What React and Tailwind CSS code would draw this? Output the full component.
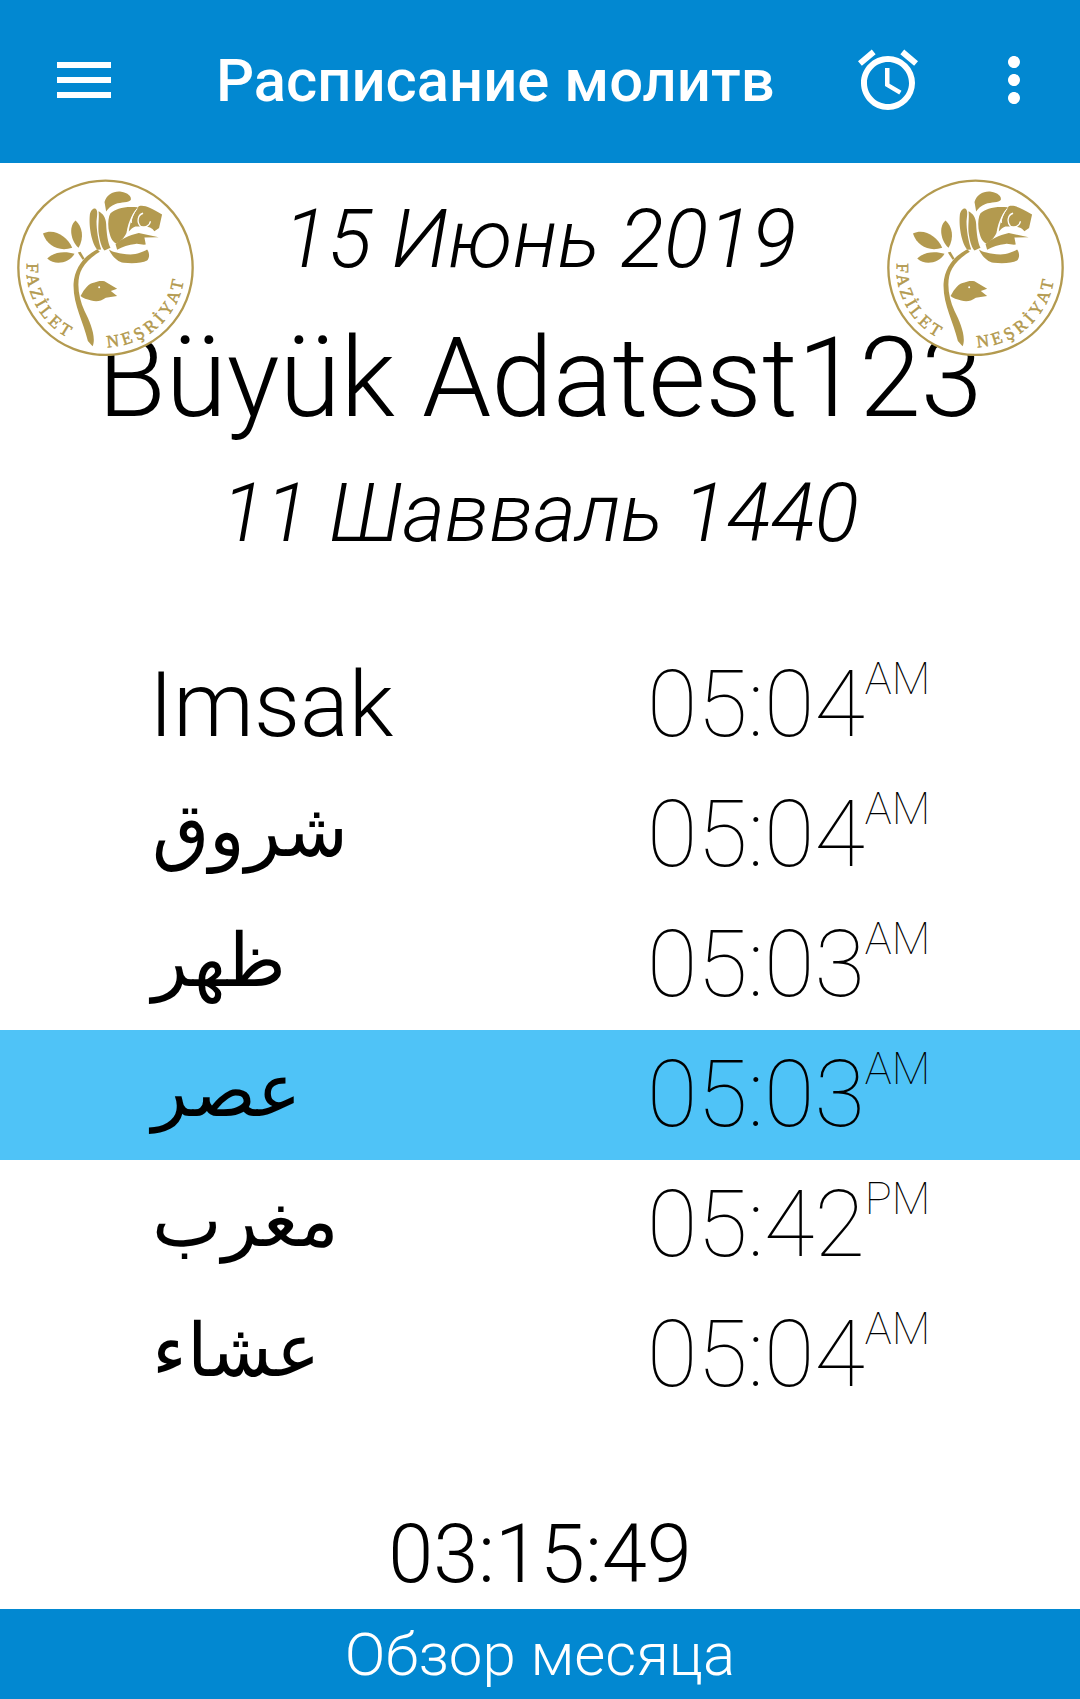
import React from "react";
import { MdMenu, MdAccessAlarm, MdMoreVert } from "react-icons/md";

const prayers = [
  { name: "Imsak", time: "05:04", ampm: "AM" },
  { name: "شروق", time: "05:04", ampm: "AM", arabic: true },
  { name: "ظهر", time: "05:03", ampm: "AM", arabic: true },
  { name: "عصر", time: "05:03", ampm: "AM", arabic: true, active: true },
  { name: "مغرب", time: "05:42", ampm: "PM", arabic: true },
  { name: "عشاء", time: "05:04", ampm: "AM", arabic: true },
];

// viewBox is in the pixels of the 3x crop of the logo
const Logo = ({ className, id }) => (
  <svg viewBox="50 40 530 535" className={className}>
    <circle cx="315" cy="310" r="262" fill="#fff" stroke="#b39a4f" strokeWidth="7" />
    <g fill="#b39a4f">
      {/* leaves */}
      <path d="M127 207C160 190 200 215 215 250C175 262 140 245 127 207Z" />
      <path d="M225 168C245 185 252 220 234 250C215 235 200 190 225 168Z" />
      <path d="M140 282C165 258 200 262 222 268C205 295 165 305 140 282Z" />
      <path d="M232 264L240 262L252 282L246 286Z" />
      {/* stem and bud */}
      <path d="M290 254C250 275 222 310 219 358C217 420 248 470 262 530L276 546C288 520 270 475 252 440C232 395 226 345 245 312C256 292 275 275 298 262Z" />
      <path d="M240 395C252 372 265 356 282 354C290 350 300 348 312 350L350 373L331 380L350 395L316 400C300 412 285 412 272 408C258 405 248 402 240 395Z" />
      <circle cx="296" cy="368" r="3" fill="#fff" />
      {/* rose */}
      <path d="M312 112C318 90 340 78 362 81C382 84 394 95 391 106C385 114 362 112 345 118C332 123 322 132 317 141Z" />
      <path d="M268 150C270 138 278 130 284 132C293 136 290 152 288 170C288 195 293 228 302 255L291 256C275 240 264 190 268 150Z" />
      <path d="M294 140C306 146 316 158 317 178C318 205 322 235 330 250L312 258C305 252 299 235 295 210C291 185 297 160 294 140Z" />
      <path d="M330 146C345 132 372 124 412 128C398 146 385 165 378 205C370 222 358 232 346 236C335 232 328 215 324 192C322 172 324 156 330 146Z" />
      <path d="M415 125C430 120 450 128 485 150L476 190L462 200C455 190 445 186 430 186L405 186C395 190 390 196 385 201C388 178 397 150 415 125Z" />
      <path d="M345 238C360 225 385 212 415 205L475 218L432 219L436 240C425 242 415 236 405 238C385 240 365 246 350 256Z" />
      <path d="M325 255C335 262 355 268 390 270C410 270 428 262 440 255C448 265 448 280 440 288C425 296 400 297 370 295C350 292 335 275 325 255Z" />
    </g>
    <path d="M428 146C412 150 408 172 420 185C432 192 448 184 450 170" fill="none" stroke="#fff" strokeWidth="4" />
    <path d="M410 133C398 146 392 160 393 175" fill="none" stroke="#fff" strokeWidth="3" />
    <defs>
      <path id={id + "l"} d="M79 296A236 236 0 0 0 215 527" />
      <path id={id + "r"} d="M320 548A238 238 0 0 0 553 320" />
    </defs>
    <text fill="#b39a4f" stroke="#b39a4f" strokeWidth="1.5" fontFamily="'Liberation Serif', serif" fontSize="52" letterSpacing="10">
      <textPath href={"#" + id + "l"}>FAZİLET</textPath>
    </text>
    <text fill="#b39a4f" stroke="#b39a4f" strokeWidth="1.5" fontFamily="'Liberation Serif', serif" fontSize="52" letterSpacing="12">
      <textPath href={"#" + id + "r"}>NEŞRİYAT</textPath>
    </text>
  </svg>
);

const PrayerRow = ({ name, time, ampm, arabic, active }) => (
  <div className={`flex h-[130px] items-center justify-between pl-[149px] pr-[154px] ${active ? "bg-[#4fc3f7]" : ""}`}>
    <span
      className={
        arabic
          ? "ml-[3px] pb-[8px] text-[74px] leading-none text-black"
          : "text-[91px] leading-none font-light text-black"
      }
    >
      {name}
    </span>
    <span className="flex w-[279px] items-start">
      <span className="text-[92px] leading-none font-thin text-black">{time}</span>
      <span className="-mt-[3px] text-[45px] leading-none font-thin text-black">{ampm}</span>
    </span>
  </div>
);

export default function App() {
  return (
    <div className="relative flex h-[1699px] w-[1080px] flex-col overflow-hidden bg-white font-['Roboto',sans-serif]">
      <header className="flex h-[163px] items-center bg-[#0288d1] pb-[3px] text-white">
        <MdMenu className="ml-[48px] size-[72px]" />
        <h1 className="ml-[96px] w-[559px] pt-[3px] text-[59.8px] leading-none font-medium">Расписание молитв</h1>
        <MdAccessAlarm className="ml-[77px] size-[72px]" />
        <MdMoreVert className="ml-[54px] size-[72px]" />
      </header>

      <div className="flex flex-col items-center text-black">
        <p className="mt-[28px] text-[82px] leading-[96px] font-light italic">15 Июнь 2019</p>
        <p className="mt-[29px] text-[111px] leading-[124px] font-light">Büyük Adatest123</p>
        <p className="mt-[25px] text-[81.7px] leading-[96px] font-light italic">11 Шавваль 1440</p>
      </div>

      <div className="mt-[79px] flex flex-col">
        {prayers.map((p, i) => (
          <PrayerRow key={i} {...p} />
        ))}
      </div>

      <p className="mt-auto pb-[6px] text-center text-[81px] leading-[96px] font-light text-black">03:15:49</p>
      <footer className="flex h-[90px] items-center justify-center bg-[#0288d1] pt-[2px] text-[60px] leading-none font-light text-white">
        Обзор месяца
      </footer>

      <Logo id="a" className="absolute top-[178px] left-[17px] h-[178px] w-[177px]" />
      <Logo id="b" className="absolute top-[178px] left-[887px] h-[178px] w-[177px]" />
    </div>
  );
}
